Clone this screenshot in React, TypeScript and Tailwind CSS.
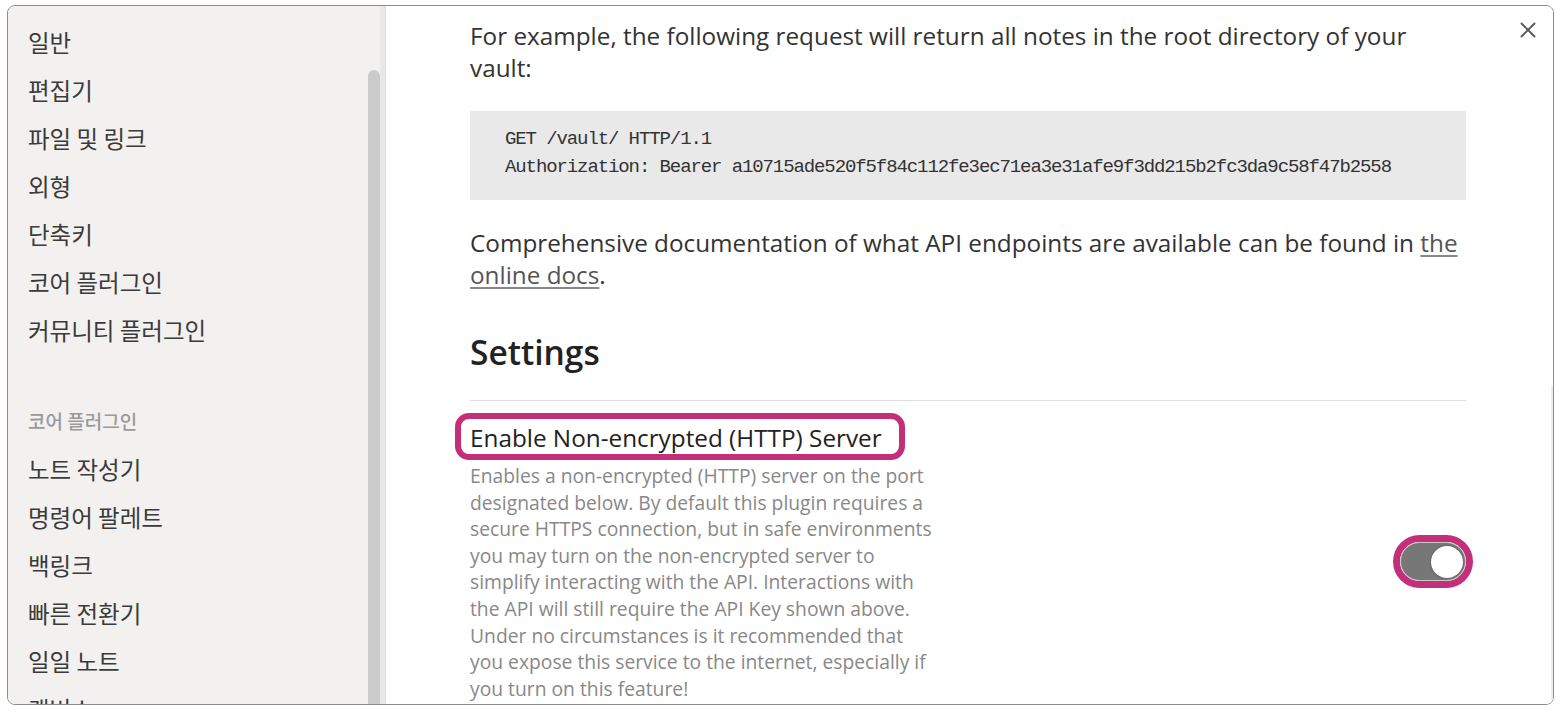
import { X } from 'lucide-react';

const generalItems = ['일반', '편집기', '파일 및 링크', '외형', '단축키', '코어 플러그인', '커뮤니티 플러그인'];
const pluginItems = ['노트 작성기', '명령어 팔레트', '백링크', '빠른 전환기', '일일 노트', '캔버스'];

const description = [
    'Enables a non-encrypted (HTTP) server on the port',
    'designated below. By default this plugin requires a',
    'secure HTTPS connection, but in safe environments',
    'you may turn on the non-encrypted server to',
    'simplify interacting with the API. Interactions with',
    'the API will still require the API Key shown above.',
    'Under no circumstances is it recommended that',
    'you expose this service to the internet, especially if',
    'you turn on this feature!',
];

function Sidebar() {
    return (
        <aside className="relative w-[378px] shrink-0 bg-[#f2f1f0] border-r border-[#dedede] overflow-hidden font-['Noto_Sans_CJK_KR','Noto_Sans',sans-serif]">
            <nav className="pt-[12px] pl-[20px]">
                {generalItems.map((item) => (
                    <div key={item} className="h-[48px] leading-[48px] text-[23.5px] text-[#3b3b3b]">
                        {item}
                    </div>
                ))}
                <div className="mt-[43px] h-[48px] leading-[48px] text-[19px] font-medium text-[#9a9a9a]">
                    코어 플러그인
                </div>
                {pluginItems.map((item) => (
                    <div key={item} className="h-[48px] leading-[48px] text-[23.5px] text-[#3b3b3b]">
                        {item}
                    </div>
                ))}
            </nav>

            {/* scrollbar */}
            <div className="absolute top-0 right-0 h-full w-[5px] bg-[#e8e8e8]" />
            <div className="absolute top-[64px] right-[5px] w-[12px] h-[700px] rounded-full bg-[#cbcbcb]" />
        </aside>
    );
}

function Toggle() {
    return (
        <div className="rounded-full ring-[7px] ring-[#c42f7a]">
            <div className="relative w-[66px] h-[39px] rounded-full bg-[#777777] border-[1.5px] border-[#c9c9c9]">
                <div className="absolute right-[2px] top-[2.5px] w-[32px] h-[32px] rounded-full bg-white shadow-[0_0_2px_rgba(0,0,0,0.4)]" />
            </div>
        </div>
    );
}

export default function App() {
    return (
        <div className="w-[1560px] h-[712px] bg-white overflow-hidden">
            <div className="ml-[7px] mt-[5px] w-[1547px] h-[700px] flex border border-[#8c8c8c] rounded-[8px] overflow-hidden">
                <Sidebar />

                <main className="relative flex-1 bg-white overflow-hidden font-['Open_Sans','Noto_Sans',sans-serif]">
                    <button className="absolute top-[11px] right-[12px] text-[#555]">
                        <X size={26} strokeWidth={1.7} />
                    </button>

                    {/* content scrollbar track */}
                    <div className="absolute top-[380px] right-0 w-[2px] h-full bg-[#ececec]" />

                    <div className="pl-[84px] pt-[14px] w-[1080px]">
                        <p className="text-[24.3px] leading-[32px] text-[#333]">
                            For example, the following request will return all notes in the root directory of your
                            <br />
                            vault:
                        </p>

                        <pre className="mt-[27px] bg-[#e9e9e9] pl-[35px] pt-[14px] pb-[19px] font-['Liberation_Mono',monospace] text-[19px] tracking-[-1.1px] leading-[28px] text-[#333]">
                            {'GET /vault/ HTTP/1.1\nAuthorization: Bearer a10715ade520f5f84c112fe3ec71ea3e31afe9f3dd215b2fc3da9c58f47b2558'}
                        </pre>

                        <p className="mt-[27px] text-[24.3px] leading-[32px] text-[#333]">
                            Comprehensive documentation of what API endpoints are available can be found in{' '}
                            <a className="text-[#555] underline decoration-[#888] underline-offset-[3px]">the</a>
                            <br />
                            <a className="text-[#555] underline decoration-[#888] underline-offset-[3px]">online docs</a>.
                        </p>

                        <h2 className="mt-[39px] text-[33.5px] leading-[44px] font-semibold text-[#222]">Settings</h2>

                        <div className="mt-[26px] border-t border-[#dddddd]" />

                        <div className="flex items-center justify-between">
                            <div className="pt-[22px] pb-[20px]">
                                <div className="relative text-[24.3px] leading-[30px] text-[#222]">
                                    Enable Non-encrypted (HTTP) Server
                                    <span className="absolute left-[-15px] top-[-10px] w-[450px] h-[47px] rounded-[14px] border-[6px] border-[#c42f7a]" />
                                </div>
                                <div className="mt-[10px] text-[19.3px] leading-[26.6px] text-[#888]">
                                    {description.map((line) => (
                                        <div key={line}>{line}</div>
                                    ))}
                                </div>
                            </div>
                            <Toggle />
                        </div>
                    </div>
                </main>
            </div>
        </div>
    );
}
